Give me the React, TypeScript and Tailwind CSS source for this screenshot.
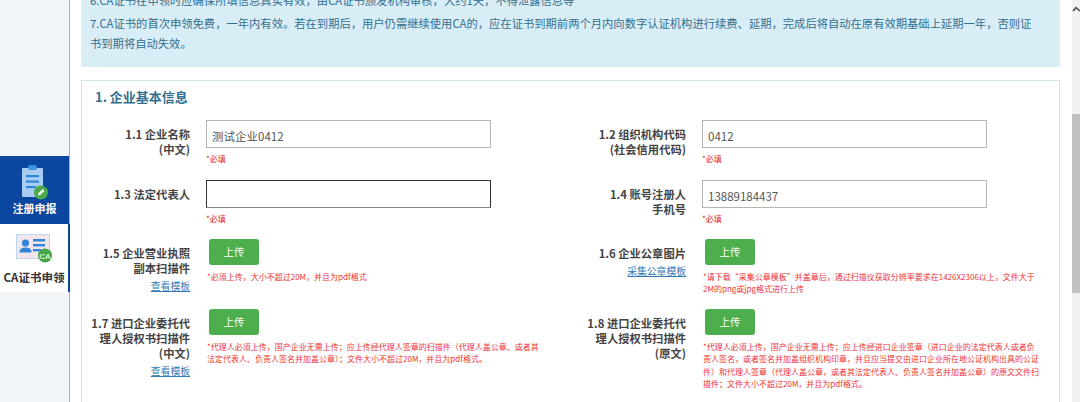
import React from "react";

const font = { fontFamily: '"Noto Sans CJK SC", "Noto Sans", sans-serif' };

function Label({ lines, link, top }: { lines: string[]; link?: string; top: string }) {
  return (
    <div className={`w-[100px] shrink-0 text-right text-[11.3px] leading-[15px] font-bold text-[#444] ${top}`}>
      {lines.map((l) => (
        <div key={l} className="whitespace-nowrap">{l}</div>
      ))}
      {link && <div className="mt-[3px] font-normal text-[9.8px] leading-[15px] text-[#337ab7] underline whitespace-nowrap">{link}</div>}
    </div>
  );
}

function TextField({ lines, value, focus }: { lines: string[]; value: string; focus?: boolean }) {
  return (
    <div className="flex gap-[16px] h-[60px]">
      <Label lines={lines} top="pt-[8px]" />
      <div>
        <div
          className={`mt-[1px] w-[285px] h-[28px] border pl-[5px] pt-[5px] text-[11.5px] leading-[20px] text-[#555] ${
            focus ? "border-[#333] border-b-[#888]" : "border-[#b5b5b5]"
          }`}
        >
          {value}
        </div>
        <div className="text-[8px] leading-[12px] mt-[5px] text-[#e81c1c]">*必填</div>
      </div>
    </div>
  );
}

function Upload({ lines, link, note, h }: { lines: string[]; link?: string; note: string; h: string }) {
  return (
    <div className={`flex gap-[16px] ${h}`}>
      <Label lines={lines} link={link} top="pt-[7px]" />
      <div>
        <div className="ml-[3px] w-[50px] h-[26px] rounded-[3px] bg-[#4cae4c] text-white text-[10.5px] leading-[25px] text-center">上传</div>
        <div className="mt-[6px] ml-[1px] w-[338px] text-[8px] leading-[12.4px] text-[#ee3333]">{note}</div>
      </div>
    </div>
  );
}

function ClipIcon() {
  return (
    <svg width="27" height="35" viewBox="0 0 27 35" className="block">
      <rect x="0" y="3" width="21" height="29" rx="1" fill="#a9cdf2" />
      <rect x="6" y="0" width="9" height="5" rx="2.5" fill="#3f93e0" />
      <rect x="4" y="10" width="13" height="2.2" fill="#2f86d9" />
      <rect x="4" y="15.5" width="13" height="2.2" fill="#2f86d9" />
      <rect x="4" y="21" width="10" height="2.2" fill="#2f86d9" />
      <circle cx="19" cy="27.5" r="7" fill="#4bab4b" />
      <path d="M16 30.5l.6-2.4 4-4 1.8 1.8-4 4z" fill="#fff" />
    </svg>
  );
}

function CaIcon() {
  return (
    <svg width="37" height="29" viewBox="0 0 37 29" className="block">
      <rect x="0.5" y="0.5" width="33" height="24" fill="#f2e6ec" stroke="#bcd8f3" />
      <circle cx="9.5" cy="9" r="3.6" fill="#2f86d9" />
      <path d="M3.5 18.5c0-3.6 2.6-4.9 6-4.9s6 1.3 6 4.9z" fill="#2f86d9" />
      <rect x="17" y="5" width="12" height="2.4" fill="#2f86d9" />
      <rect x="17" y="10" width="12" height="2.4" fill="#2f86d9" />
      <rect x="17" y="15" width="8" height="2.4" fill="#2f86d9" />
      <circle cx="29" cy="21.5" r="7" fill="#43a647" />
      <text x="29" y="24.5" textAnchor="middle" fontSize="8" fontWeight="700" fill="#d8f0d8" fontFamily="Liberation Sans, sans-serif">CA</text>
    </svg>
  );
}

export default function App() {
  return (
    <div className="flex h-[402px] w-[1080px] overflow-hidden bg-white" style={font}>
      <aside className="w-[70px] shrink-0 bg-[#f1f4f8] border-r-[1px] border-r-[#7cbcec] flex flex-col pt-[156px]">
        <div className="w-[69px] h-[68px] bg-[#0b479f] flex flex-col items-center pt-[9px] text-white">
          <div className="ml-[1px]"><ClipIcon /></div>
          <div className="text-[11px] leading-[14px] font-bold mt-[1px]">注册申报</div>
        </div>
        <div className="w-[70px] h-[68px] bg-white border-r-2 border-r-[#0b479f] flex flex-col items-center pt-[10px]">
          <div className="ml-[1px]"><CaIcon /></div>
          <div className="text-[11.5px] leading-[14px] font-bold text-[#333] mt-[7px] whitespace-nowrap">CA证书申领</div>
        </div>
      </aside>

      <main className="w-[1002px] pl-[11px] flex flex-col overflow-hidden">
        <div className="-mt-[10px] w-[979px] h-[77px] bg-[#d9edf7] pl-[9px] pr-[20px] text-[11.3px] leading-[20px] text-[#31708f] shrink-0">
          <div className="mb-[3px] whitespace-nowrap">6.CA证书在申领时应确保所填信息真实有效，由CA证书颁发机构审核，大约1天，不得泄露信息等</div>
          <div>7.CA证书的首次申领免费，一年内有效。若在到期后，用户仍需继续使用CA的，应在证书到期前两个月内向数字认证机构进行续费、延期，完成后将自动在原有效期基础上延期一年，否则证书到期将自动失效。</div>
        </div>

        <section className="mt-[13px] w-[979px] border border-[#cfe6ee] border-b-0 pl-[8px] flex-1">
          <h2 className="ml-[5px] text-[13px] leading-[18px] font-bold text-[#31708f] mt-[7px]">1. 企业基本信息</h2>
          <div className="grid grid-cols-[496px_1fr] mt-[13px]">
            <TextField lines={["1.1 企业名称", "(中文)"]} value="测试企业0412" />
            <TextField lines={["1.2 组织机构代码", "(社会信用代码)"]} value="0412" />
            <TextField lines={["1.3 法定代表人"]} value="" focus />
            <TextField lines={["1.4 账号注册人", "手机号"]} value="13889184437" />
            <Upload
              h="h-[70px]"
              lines={["1.5 企业营业执照", "副本扫描件"]}
              link="查看模板"
              note="*必须上传，大小不超过20M，并且为pdf格式"
            />
            <Upload
              h="h-[70px]"
              lines={["1.6 企业公章图片"]}
              link="采集公章模板"
              note="*请下载“采集公章模板”并盖章后，通过扫描仪获取分辨率要求在1426X2306以上，文件大于2M的png或jpg格式进行上传"
            />
            <Upload
              h="h-[90px]"
              lines={["1.7 进口企业委托代", "理人授权书扫描件", "(中文)"]}
              link="查看模板"
              note="*代理人必须上传，国产企业无需上传；应上传经代理人签章的扫描件（代理人盖公章、或者其法定代表人、负责人签名并加盖公章）；文件大小不超过20M，并且为pdf格式。"
            />
            <Upload
              h="h-[90px]"
              lines={["1.8 进口企业委托代", "理人授权书扫描件", "(原文)"]}
              note="*代理人必须上传，国产企业无需上传；应上传经进口企业签章（进口企业的法定代表人或者负责人签名，或者签名并加盖组织机构印章，并且应当提交由进口企业所在地公证机构出具的公证件）和代理人签章（代理人盖公章，或者其法定代表人、负责人签名并加盖公章）的原文文件扫描件；文件大小不超过20M，并且为pdf格式。"
            />
          </div>
        </section>
      </main>

      <div className="w-[8px] shrink-0 bg-[#f1f1f1] pt-[6px]">
        <svg width="8" height="6" viewBox="0 0 8 6" className="block">
          <path d="M1 5l3-3.4L8 5" fill="none" stroke="#505050" strokeWidth="1.6" />
        </svg>
        <div className="mt-[102px] h-[179px] bg-[#c1c1c1]" />
      </div>
    </div>
  );
}
